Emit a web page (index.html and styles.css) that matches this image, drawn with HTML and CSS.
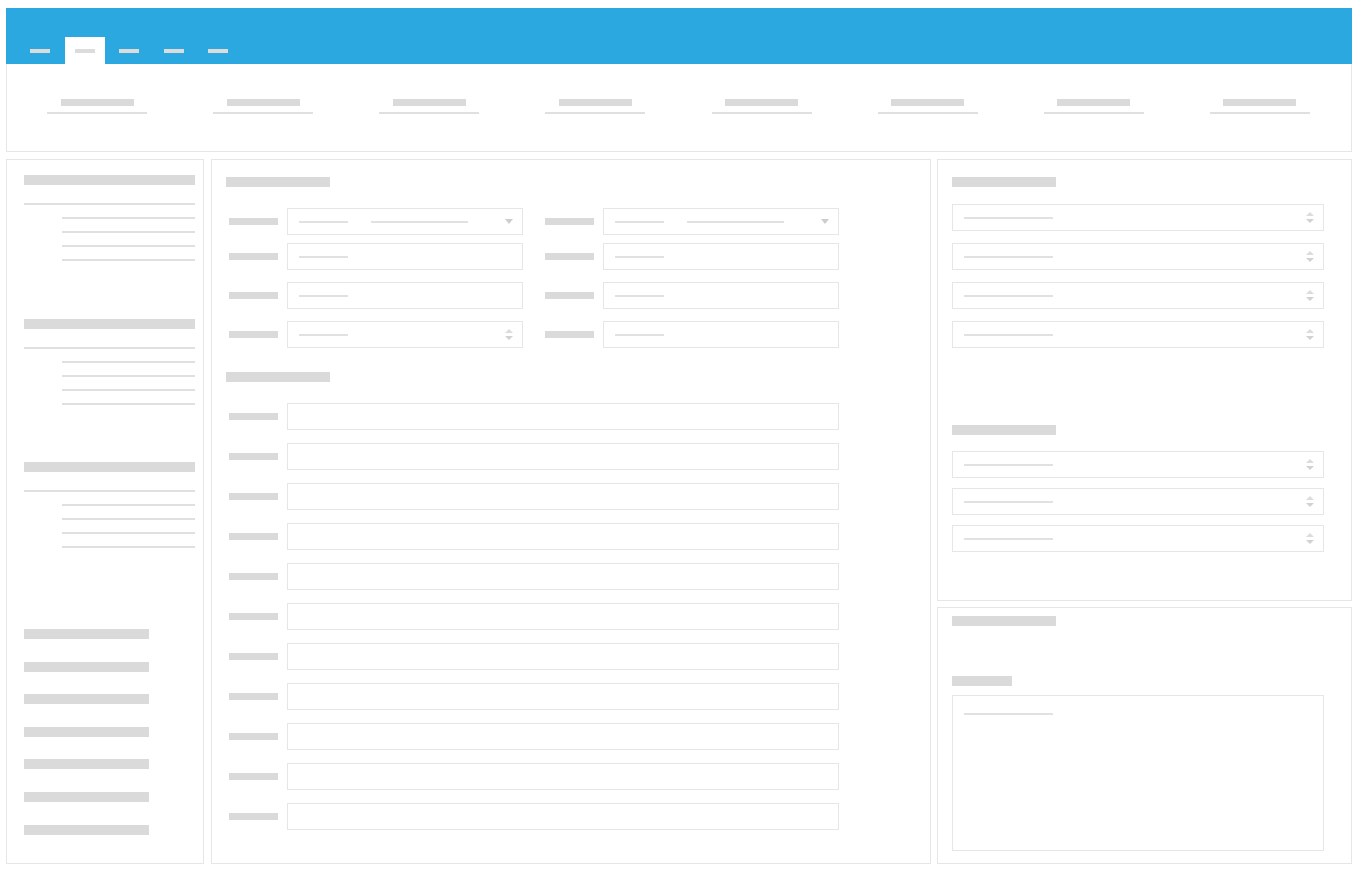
FILE: index.html
```html
<!DOCTYPE html>
<html lang="en">
<head>
<meta charset="utf-8">
<title>Wireframe</title>
<link rel="stylesheet" href="styles.css">
</head>
<body>
<header class="topbar">
  <nav class="tabs">
    <span class="tab"><i class="tab-label"></i></span>
    <span class="tab active"><i class="tab-label"></i></span>
    <span class="tab"><i class="tab-label"></i></span>
    <span class="tab"><i class="tab-label"></i></span>
    <span class="tab"><i class="tab-label"></i></span>
  </nav>
</header>

<section class="stats">
  <div class="stat"><span class="stat-title"></span><span class="stat-rule"></span></div>
  <div class="stat"><span class="stat-title"></span><span class="stat-rule"></span></div>
  <div class="stat"><span class="stat-title"></span><span class="stat-rule"></span></div>
  <div class="stat"><span class="stat-title"></span><span class="stat-rule"></span></div>
  <div class="stat"><span class="stat-title"></span><span class="stat-rule"></span></div>
  <div class="stat"><span class="stat-title"></span><span class="stat-rule"></span></div>
  <div class="stat"><span class="stat-title"></span><span class="stat-rule"></span></div>
  <div class="stat"><span class="stat-title"></span><span class="stat-rule"></span></div>
</section>

<main class="workspace">
  <aside class="panel sidebar">
    <div class="tree-group">
      <div class="tree-head"></div>
      <div class="tree-rule"></div>
      <div class="tree-item"></div>
      <div class="tree-item"></div>
      <div class="tree-item"></div>
      <div class="tree-item"></div>
    </div>
    <div class="tree-group">
      <div class="tree-head"></div>
      <div class="tree-rule"></div>
      <div class="tree-item"></div>
      <div class="tree-item"></div>
      <div class="tree-item"></div>
      <div class="tree-item"></div>
    </div>
    <div class="tree-group">
      <div class="tree-head"></div>
      <div class="tree-rule"></div>
      <div class="tree-item"></div>
      <div class="tree-item"></div>
      <div class="tree-item"></div>
      <div class="tree-item"></div>
    </div>
    <ul class="links">
      <li></li><li></li><li></li><li></li><li></li><li></li><li></li>
    </ul>
  </aside>

  <section class="panel editor">
    <div class="heading"></div>
    <div class="field-grid">
      <div class="field-row first">
        <div class="field">
          <span class="label"></span>
          <div class="input">
            <span class="value"></span><span class="value long"></span>
            <span class="caret"></span>
          </div>
        </div>
        <div class="field">
          <span class="label"></span>
          <div class="input">
            <span class="value"></span><span class="value long"></span>
            <span class="caret"></span>
          </div>
        </div>
      </div>
      <div class="field-row">
        <div class="field"><span class="label"></span><div class="input"><span class="value"></span></div></div>
        <div class="field"><span class="label"></span><div class="input"><span class="value"></span></div></div>
      </div>
      <div class="field-row">
        <div class="field"><span class="label"></span><div class="input"><span class="value"></span></div></div>
        <div class="field"><span class="label"></span><div class="input"><span class="value"></span></div></div>
      </div>
      <div class="field-row">
        <div class="field">
          <span class="label"></span>
          <div class="input">
            <span class="value"></span>
            <span class="spinner"><i class="up"></i><i class="down"></i></span>
          </div>
        </div>
        <div class="field"><span class="label"></span><div class="input"><span class="value"></span></div></div>
      </div>
    </div>

    <div class="heading second"></div>
    <div class="wide-list">
      <div class="field"><span class="label"></span><div class="input wide"></div></div>
      <div class="field"><span class="label"></span><div class="input wide"></div></div>
      <div class="field"><span class="label"></span><div class="input wide"></div></div>
      <div class="field"><span class="label"></span><div class="input wide"></div></div>
      <div class="field"><span class="label"></span><div class="input wide"></div></div>
      <div class="field"><span class="label"></span><div class="input wide"></div></div>
      <div class="field"><span class="label"></span><div class="input wide"></div></div>
      <div class="field"><span class="label"></span><div class="input wide"></div></div>
      <div class="field"><span class="label"></span><div class="input wide"></div></div>
      <div class="field"><span class="label"></span><div class="input wide"></div></div>
      <div class="field"><span class="label"></span><div class="input wide"></div></div>
    </div>
  </section>

  <div class="side-column">
    <section class="panel props">
      <div class="heading"></div>
      <div class="num-list">
        <div class="input num"><span class="value mid"></span><span class="spinner"><i class="up"></i><i class="down"></i></span></div>
        <div class="input num"><span class="value mid"></span><span class="spinner"><i class="up"></i><i class="down"></i></span></div>
        <div class="input num"><span class="value mid"></span><span class="spinner"><i class="up"></i><i class="down"></i></span></div>
        <div class="input num"><span class="value mid"></span><span class="spinner"><i class="up"></i><i class="down"></i></span></div>
      </div>
      <div class="heading props-second"></div>
      <div class="num-list compact">
        <div class="input num"><span class="value mid"></span><span class="spinner"><i class="up"></i><i class="down"></i></span></div>
        <div class="input num"><span class="value mid"></span><span class="spinner"><i class="up"></i><i class="down"></i></span></div>
        <div class="input num"><span class="value mid"></span><span class="spinner"><i class="up"></i><i class="down"></i></span></div>
      </div>
    </section>
    <section class="panel notes">
      <div class="heading"></div>
      <div class="small-label"></div>
      <div class="textarea"><span class="value mid"></span></div>
    </section>
  </div>
</main>
</body>
</html>
```

FILE: styles.css
```css
* { box-sizing: border-box; }

body {
  margin: 8px 6px;
  background: #ffffff;
  font-family: "Liberation Sans", Arial, sans-serif;
}

/* header */
.topbar {
  height: 56px;
  background: #2ca8e1;
  display: flex;
  align-items: flex-end;
  padding-left: 14px;
}
.tabs { display: flex; gap: 4.5px; }
.tab {
  width: 40px;
  height: 27px;
  display: flex;
  align-items: center;
  justify-content: center;
}
.tab.active { background: #ffffff; }
.tab-label {
  display: block;
  width: 20px;
  height: 4px;
  background: #dcdcdc;
}

/* stats strip */
.stats {
  height: 88px;
  border: 1px solid #e6e6e6;
  border-top: none;
  display: grid;
  grid-template-columns: repeat(8, 1fr);
  padding: 35px 8px 0 7px;
}
.stat { display: flex; flex-direction: column; align-items: center; }
.stat-title { width: 73px; height: 7px; background: #dadada; }
.stat-rule { width: 100px; height: 2px; background: #e0e0e0; margin-top: 6px; }

/* workspace */
.workspace {
  display: flex;
  margin-top: 7px;
  height: 705px;
}
.panel { border: 1px solid #e6e6e6; background: #fff; }

.sidebar { width: 198px; margin-right: 7px; padding: 15px 0 0 17px; }
.tree-head { width: 171px; height: 10px; background: #dadada; }
.tree-rule { width: 171px; height: 2px; background: #e0e0e0; margin-top: 18px; }
.tree-item { width: 133px; height: 2px; background: #e0e0e0; margin: 12px 0 0 38px; }
.tree-group + .tree-group { margin-top: 57.5px; }
.links {
  list-style: none;
  margin: 81px 0 0;
  padding: 0;
  display: flex;
  flex-direction: column;
  gap: 22.6px;
}
.links li { width: 125px; height: 10px; background: #dadada; }

.editor { width: 720px; margin-right: 6px; padding: 17px 0 0 14px; }
.heading { width: 104px; height: 10px; background: #dadada; }
.heading.second { margin-top: 24px; }

.field-grid { margin-top: 21px; }
.field-row { display: flex; gap: 19px; margin-top: 12px; }
.field-row.first { margin-top: 0; margin-bottom: -4px; }
.field { display: flex; align-items: center; padding-left: 3px; }
.label { width: 49px; height: 7px; background: #dadada; margin-right: 9px; }

.input {
  width: 236px;
  height: 27px;
  border: 1px solid #e6e6e6;
  display: flex;
  align-items: center;
  padding: 0 9px 0 11px;
}
.input.wide { width: 552px; }
.value { width: 49px; height: 2px; background: #e1e1e1; }
.value.long { width: 97px; margin-left: 23px; }
.value.mid { width: 89px; }

.caret {
  margin-left: auto;
  width: 0; height: 0;
  border-left: 4.5px solid transparent;
  border-right: 4.5px solid transparent;
  border-top: 5px solid #cdcdcd;
}
.spinner {
  margin-left: auto;
  display: flex;
  flex-direction: column;
  gap: 3px;
}
.spinner i { display: block; width: 0; height: 0; border-left: 4.5px solid transparent; border-right: 4.5px solid transparent; }
.spinner .up { border-bottom: 4px solid #dcdcdc; }
.spinner .down { border-top: 4px solid #d2d2d2; }

.wide-list { margin-top: 21px; display: flex; flex-direction: column; gap: 13px; }

.side-column { flex: 1; display: flex; flex-direction: column; gap: 6px; }
.props { height: 442px; padding: 17px 27px 0 14px; }
.num-list { margin-top: 17px; display: flex; flex-direction: column; gap: 12px; }
.num-list.compact { margin-top: 16px; gap: 10px; }
.input.num { width: 100%; padding-left: 11px; }
.props-second { margin-top: 77px; }

.notes { flex: 1; padding: 8px 27px 0 14px; }
.small-label { width: 60px; height: 10px; background: #dadada; margin-top: 50px; }
.textarea {
  margin-top: 9px;
  height: 156px;
  border: 1px solid #e6e6e6;
  padding: 17px 11px;
}
.textarea .value { display: block; }
```
